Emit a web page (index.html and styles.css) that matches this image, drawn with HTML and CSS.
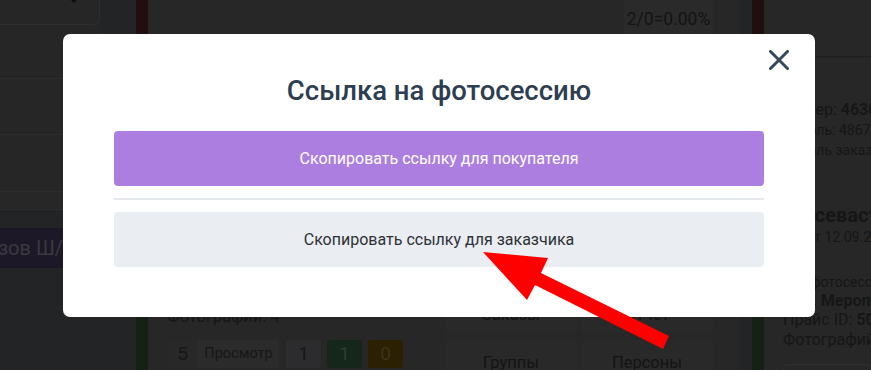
FILE: index.html
```html
<!DOCTYPE html>
<html lang="ru">
<head>
    <meta charset="UTF-8">
    <meta name="viewport" content="width=device-width, initial-scale=1.0">
    <title>Ссылка на фотосессию</title>
    <link rel="stylesheet" href="styles.css">
</head>
<body>
    <div class="page">
        <aside class="side">
            <div class="side-top"><span class="caret"></span></div>
            <ul class="side-list">
                <li></li>
                <li></li>
                <li></li>
                <li class="short"></li>
            </ul>
            <div class="side-btn"><span>Список заказов Ш/Д</span></div>
        </aside>

        <main class="main">
            <div class="card card-red head">
                <div class="stat">2/0=0.00%</div>
            </div>
            <div class="card card-green body">
                <div class="info">
                    <div class="photos">Фотографии: 4</div>
                    <div class="counters">
                        <div class="btn-group">
                            <span class="cnt num">5</span>
                            <span class="cnt view">Просмотр</span>
                        </div>
                        <span class="cnt">1</span>
                        <span class="cnt ok">1</span>
                        <span class="cnt warn">0</span>
                    </div>
                </div>
                <nav class="nav">
                    <a>Заказы</a>
                    <a>Отчет</a>
                    <a>Группы</a>
                    <a>Персоны</a>
                </nav>
            </div>
        </main>

        <aside class="aside">
            <div class="card card-red head"></div>
            <div class="card card-green details">
                <div class="l-main">Номер: <b>46301</b></div>
                <div class="l-small">Пароль: 48671</div>
                <div class="l-small">Пароль заказчика</div>
                <div class="l-title">ул. севастопольская</div>
                <div class="l-small">Отчет 12.09.2023</div>
                <div class="l-small gap">Тип фотосессии</div>
                <div class="l-bold">Вид: Мероприятие</div>
                <div class="l-main">Прайс ID: <b>501</b></div>
                <div class="l-main">Фотографий: 4</div>
                <div class="outline"></div>
            </div>
        </aside>
    </div>

    <div class="overlay">
        <div class="modal">
            <button class="modal-close" aria-label="Закрыть">
                <svg width="20" height="20" viewBox="0 0 20 20">
                    <path d="M1.5 1.5 L18.5 18.5 M18.5 1.5 L1.5 18.5" stroke="#34495e" stroke-width="3" stroke-linecap="round" fill="none"/>
                </svg>
            </button>
            <h2 class="modal-title">Ссылка на фотосессию</h2>
            <button class="link-btn buyer">Скопировать ссылку для покупателя</button>
            <hr class="divider">
            <button class="link-btn client">Скопировать ссылку для заказчика</button>
        </div>

        <svg class="arrow" width="871" height="370" viewBox="0 0 871 370">
            <polygon points="483,252 548,258 541,273 669,336 663,349 535,285 527,300" fill="#ff0000"/>
        </svg>
    </div>
</body>
</html>
```

FILE: styles.css
```css
* {
    box-sizing: border-box;
}

html, body {
    margin: 0;
    height: 100%;
}

body {
    font-family: Roboto, "Open Sans", "Liberation Sans", sans-serif;
    background-color: #232425;
    color: #161616;
    overflow: hidden;
}

.page {
    display: flex;
    height: 370px;
}

/* left column */

.side {
    width: 100px;
    flex-shrink: 0;
}

.side-top {
    position: relative;
    height: 25px;
    background-color: #262626;
    border: 1px solid #2e2e2e;
    border-top: none;
    border-left: none;
    border-radius: 0 0 6px 0;
}

.caret {
    position: absolute;
    left: 71px;
    top: 0;
    border-left: 3px solid transparent;
    border-right: 3px solid transparent;
    border-top: 3px solid #0c0c0c;
}

.side-list {
    list-style: none;
    margin: 0;
    padding: 0;
    background-color: #262626;
}

.side-list li {
    height: 54px;
    border-bottom: 1px solid #2d2d2d;
}

.side-list li:nth-child(2) {
    height: 56px;
}

.side-list li:nth-child(3) {
    height: 57px;
}

.side-list li.short {
    height: 18px;
    background-color: #272727;
}

.side-btn {
    display: flex;
    justify-content: flex-end;
    align-items: center;
    height: 40px;
    margin-top: 18px;
    padding-right: 22px;
    background-color: #1d1827;
    color: #3a3840;
    font-size: 20px;
    white-space: nowrap;
    overflow: hidden;
}

/* cards */

.card {
    background-color: #272727;
}

.card-red {
    border-left: 12px solid #210e0e;
}

.card-green {
    border-left: 12px solid #142114;
}

.head {
    height: 57px;
    flex-shrink: 0;
    border-bottom: 1px solid #1f1f1f;
}

.main {
    width: 604px;
    margin-left: 36px;
    flex-shrink: 0;
    display: flex;
    flex-direction: column;
}

.main .head {
    display: flex;
    justify-content: flex-end;
    padding-right: 27px;
}

.stat {
    height: 34px;
    padding: 5px 0 0;
    width: 89px;
    text-align: center;
    background-color: #2a2a2a;
    font-size: 17.5px;
    line-height: 28px;
    color: #141414;
}

.body {
    flex: 1;
    margin-top: 1px;
    display: flex;
}

.info {
    flex: 1;
    padding: 247px 0 0 19px;
}

.photos {
    font-size: 16.5px;
    line-height: 24px;
}

.counters {
    display: flex;
    gap: 6px;
    margin-top: 11px;
}

.btn-group {
    display: flex;
    margin-right: 1px;
}

.cnt {
    height: 28px;
    width: 35px;
    line-height: 28px;
    text-align: center;
    font-size: 19px;
    background-color: #2c2c2e;
    border-radius: 3px;
}

.cnt.num {
    width: 31px;
    background-color: #282828;
    border-radius: 3px 0 0 3px;
}

.cnt.view {
    width: 81px;
    font-size: 14.5px;
    background-color: #2b2b2b;
    border-radius: 0 3px 3px 0;
}

.cnt.ok {
    background-color: #15261a;
    color: #2b3d2e;
}

.cnt.warn {
    background-color: #2b2002;
    color: #3f3212;
}

.nav {
    width: 268px;
    margin: 234px 27px 0 0;
    display: grid;
    grid-template-columns: 132px 132px;
    grid-auto-rows: 41px;
    gap: 7px 4px;
    align-content: start;
}

.nav a {
    display: flex;
    align-items: center;
    justify-content: center;
    padding-top: 4px;
    background-color: #292929;
    border-radius: 3px;
    font-size: 16.5px;
    color: #141414;
}

/* right column */

.aside {
    flex: 1;
    margin-left: 12px;
    display: flex;
    flex-direction: column;
    white-space: nowrap;
    overflow: hidden;
}

.details {
    flex: 1;
    margin-top: 1px;
    padding: 41px 0 0 19px;
}

.l-main {
    font-size: 16px;
    line-height: 20px;
}

.l-main:first-child {
    line-height: 21px;
}

.l-small {
    font-size: 14px;
    line-height: 20px;
}

.l-small.gap {
    margin-top: 26px;
    line-height: 18px;
}

.l-title {
    margin-top: 43px;
    font-size: 20px;
    font-weight: 700;
    line-height: 24px;
}

.l-bold {
    font-size: 16px;
    font-weight: 700;
    line-height: 19px;
}

.outline {
    margin-top: 14px;
    height: 40px;
    border: 1px solid #2f2f2f;
    border-radius: 4px;
}

/* modal */

.overlay {
    position: fixed;
    inset: 0;
    display: flex;
    justify-content: center;
    align-items: flex-start;
    padding: 34px 0 0 7px;
}

.modal {
    position: relative;
    width: 752px;
    height: 283px;
    padding: 40px 51px 0;
    background-color: #ffffff;
    border-radius: 7px;
}

.modal-close {
    position: absolute;
    top: 16px;
    right: 26px;
    width: 20px;
    height: 20px;
    padding: 0;
    border: none;
    background: none;
    cursor: pointer;
}

.modal-close svg {
    display: block;
}

.modal-title {
    margin: 0 0 24px;
    text-align: center;
    font-size: 27.5px;
    font-weight: 500;
    line-height: 33px;
    color: #2c3e50;
}

.link-btn {
    display: block;
    width: 100%;
    height: 55px;
    border: none;
    border-radius: 4px;
    font-family: inherit;
    font-size: 16px;
    cursor: pointer;
}

.link-btn.buyer {
    background-color: #ab7ee0;
    color: #ffffff;
}

.link-btn.client {
    background-color: #eaedf2;
    color: #2d3135;
}

.divider {
    margin: 12px 0;
    height: 2px;
    border: none;
    background-color: #e5e9ee;
}

.arrow {
    position: absolute;
    top: 0;
    left: 0;
    pointer-events: none;
}
```
